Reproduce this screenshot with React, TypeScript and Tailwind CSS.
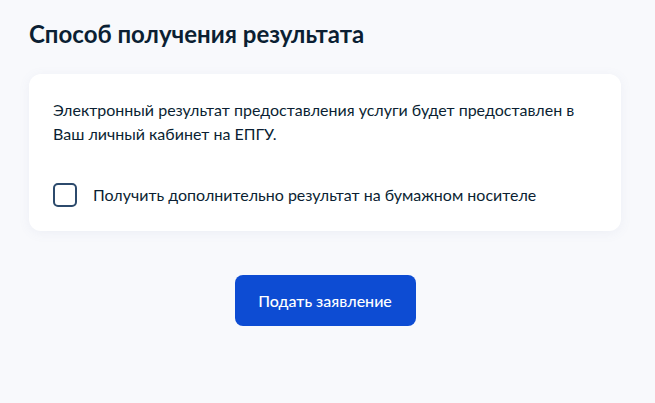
export default function App() {
  return (
    <div
      className="min-h-[403px] bg-[#f8f9fc] pl-[29px] pt-[19px]"
      style={{ fontFamily: 'Lato, "Noto Sans", sans-serif' }}
    >
      <div className="w-[592px]">
        <h2 className="text-[24px] leading-[30px] font-bold text-[#0b1f33]">
          Способ получения результата
        </h2>

        <div className="mt-[25px] rounded-xl bg-white px-6 pt-6 pb-6 shadow-[0_2px_12px_rgba(100,120,160,0.08)]">
          <p className="text-[16px] leading-6 text-[#0b1f33]">
            Электронный результат предоставления услуги будет предоставлен в
            Ваш личный кабинет на ЕПГУ.
          </p>

          <label className="mt-[37px] flex cursor-pointer items-center gap-4">
            <span className="h-6 w-6 shrink-0 rounded-[5px] border-2 border-[#2c4a6c] bg-white" />
            <span className="text-[16px] leading-6 text-[#0b1f33]">
              Получить дополнительно результат на бумажном носителе
            </span>
          </label>
        </div>

        <div className="mt-[44px] flex justify-center">
          <button className="h-[51px] w-[181px] rounded-lg bg-[#0d4cd3] text-[16px] font-medium text-white">
            Подать заявление
          </button>
        </div>
      </div>
    </div>
  )
}
